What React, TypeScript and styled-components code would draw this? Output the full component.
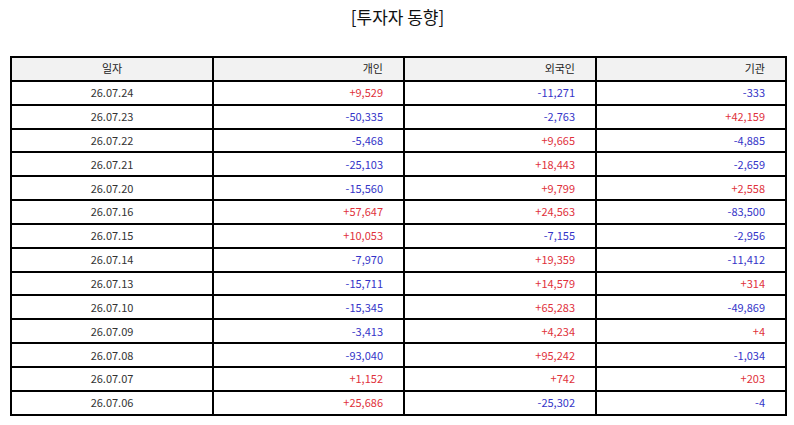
import React from 'react';
import styled, { createGlobalStyle } from 'styled-components';

type Row = [string, string, string, string];

const rows: Row[] = [
    ['26.07.24', '+9,529', '-11,271', '-333'],
    ['26.07.23', '-50,335', '-2,763', '+42,159'],
    ['26.07.22', '-5,468', '+9,665', '-4,885'],
    ['26.07.21', '-25,103', '+18,443', '-2,659'],
    ['26.07.20', '-15,560', '+9,799', '+2,558'],
    ['26.07.16', '+57,647', '+24,563', '-83,500'],
    ['26.07.15', '+10,053', '-7,155', '-2,956'],
    ['26.07.14', '-7,970', '+19,359', '-11,412'],
    ['26.07.13', '-15,711', '+14,579', '+314'],
    ['26.07.10', '-15,345', '+65,283', '-49,869'],
    ['26.07.09', '-3,413', '+4,234', '+4'],
    ['26.07.08', '-93,040', '+95,242', '-1,034'],
    ['26.07.07', '+1,152', '+742', '+203'],
    ['26.07.06', '+25,686', '-25,302', '-4'],
];

const GlobalStyle = createGlobalStyle`
    body {
        margin: 0;
        background: #fff;
        font-family: 'Noto Sans CJK KR', 'Noto Sans', sans-serif;
    }
`;

const App: React.FC = () => {
    return (
        <Page>
            <GlobalStyle />
            <Title>[투자자 동향]</Title>
            <Table>
                <colgroup>
                    <col style={{ width: '202px' }} />
                    <col style={{ width: '191px' }} />
                    <col style={{ width: '192px' }} />
                    <col style={{ width: '190px' }} />
                </colgroup>
                <thead>
                    <tr>
                        <Head align='center'>일자</Head>
                        <Head align='right'>개인</Head>
                        <Head align='right'>외국인</Head>
                        <Head align='right'>기관</Head>
                    </tr>
                </thead>
                <tbody>
                    {rows.map((row) => (
                        <tr key={row[0]}>
                            <DateCell>{row[0]}</DateCell>
                            {row.slice(1).map((value, i) => (
                                <ValueCell key={i} positive={value.startsWith('+')}>
                                    {value}
                                </ValueCell>
                            ))}
                        </tr>
                    ))}
                </tbody>
            </Table>
        </Page>
    );
};

const Page = styled.div`
    padding: 0 9px 0 10px;
`;

const Title = styled.h1`
    margin: 0;
    height: 56px;
    padding-top: 4px;
    box-sizing: border-box;

    font-size: 17px;
    font-weight: 400;
    line-height: 26px;
    text-align: center;
    color: #111;
`;

const Table = styled.table`
    width: 775px;
    border-collapse: collapse;
    table-layout: fixed;

    font-size: 11px;
    color: #333;
`;

const Cell = styled.td`
    height: 21.85px;
    padding: 0 20px 0 0;
    border: 2px solid #000;
    line-height: 21px;
    box-sizing: content-box;
`;

const Head = styled(Cell).attrs({ as: 'th' })<{ align: 'center' | 'right' }>`
    background-color: #f2f2f2;
    font-weight: 400;
    color: #222;
    text-align: ${(props) => props.align};
    padding-right: ${(props) => (props.align === 'center' ? '0' : '20px')};
`;

const DateCell = styled(Cell)`
    padding: 0;
    text-align: center;
`;

const ValueCell = styled(Cell)<{ positive: boolean }>`
    text-align: right;
    color: ${(props) => (props.positive ? '#e0313b' : '#3434c8')};
`;

export default App;
